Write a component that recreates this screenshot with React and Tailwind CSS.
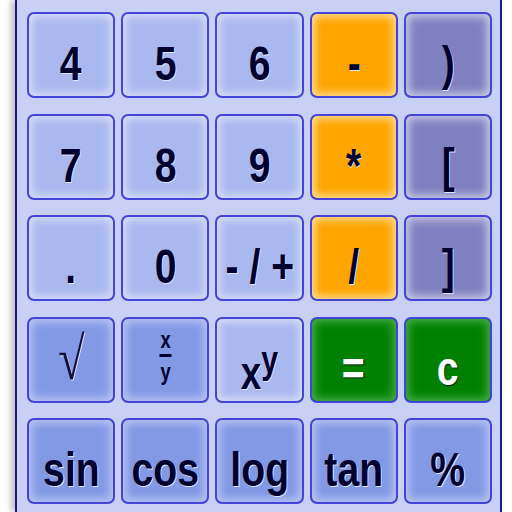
const glyph = "font-['Liberation_Sans',Arial,sans-serif] font-bold";

const tones = {
  num: "bg-[#a9b8ef] shadow-[inset_0_0_9px_3px_rgba(255,255,255,0.55)] text-[#00002e]",
  fn: "bg-[#8299e6] shadow-[inset_0_0_9px_3px_rgba(255,255,255,0.45)] text-[#00002e]",
  op: "bg-[#ffa500] shadow-[inset_0_0_9px_3px_rgba(255,240,200,0.75)] text-[#00002e]",
  par: "bg-[#7f80c0] shadow-[inset_0_0_9px_3px_rgba(255,255,255,0.6)] text-[#00002e]",
  eq: "bg-[#008000] shadow-[inset_0_0_9px_3px_rgba(200,255,200,0.35)] text-white",
};

function Key({ tone, children, align = "end" }) {
  return (
    <button
      className={`h-[86px] rounded-[7px] border-2 border-[#4444d8] flex justify-center overflow-hidden ${
        align === "end" ? "items-end pb-[8px]" : "items-center"
      } ${tones[tone]}`}
    >
      {children}
    </button>
  );
}

function Label({ children, light }) {
  return (
    <span
      className={`${glyph} inline-block whitespace-nowrap scale-x-80 text-[49px] leading-none ${
        light
          ? "[text-shadow:1px_1px_1px_#002000]"
          : "[text-shadow:1px_1px_0_#dfe6ff]"
      }`}
    >
      {children}
    </span>
  );
}

export default function App() {
  return (
    <div className="w-[512px] h-[512px] bg-white overflow-hidden">
      <div className="ml-[15px] w-[487px] h-[512px] bg-[#c8d0f5] border-x-2 border-[#1a1a80] shadow-[-4px_0_6px_rgba(0,0,0,0.25)] pt-[12px] pl-[10px] pr-[8px]">
        <div className="grid grid-cols-5 gap-x-[6px] gap-y-[15.5px]">
          <Key tone="num"><Label>4</Label></Key>
          <Key tone="num"><Label>5</Label></Key>
          <Key tone="num"><Label>6</Label></Key>
          <Key tone="op"><Label>-</Label></Key>
          <Key tone="par"><Label>)</Label></Key>

          <Key tone="num"><Label>7</Label></Key>
          <Key tone="num"><Label>8</Label></Key>
          <Key tone="num"><Label>9</Label></Key>
          <Key tone="op"><Label>*</Label></Key>
          <Key tone="par"><Label>[</Label></Key>

          <Key tone="num"><Label>.</Label></Key>
          <Key tone="num"><Label>0</Label></Key>
          <Key tone="num"><Label>- / +</Label></Key>
          <Key tone="op"><Label>/</Label></Key>
          <Key tone="par"><Label>]</Label></Key>

          <Key tone="fn" align="center">
            <span className="font-['Liberation_Serif',serif] text-[60px] leading-none text-[#10103a] [text-shadow:1px_1px_0_#dfe6ff] -mt-[2px] scale-x-80 inline-block">
              √
            </span>
          </Key>
          <Key tone="fn" align="center">
            <span className={`${glyph} flex flex-col items-center text-[23px] leading-none text-[#00002e] scale-x-80 -mt-[6px]`}>
              <span>x</span>
              <span className="w-[15px] h-[3px] bg-[#00002e] mt-[2px] mb-[4px]" />
              <span>y</span>
            </span>
          </Key>
          <Key tone="num" align="end">
            <span className={`${glyph} inline-block whitespace-nowrap scale-x-80 leading-none text-[#00002e] [text-shadow:1px_1px_0_#dfe6ff] -mb-[3px]`}>
              <span className="text-[46px]">x</span>
              <span className="text-[38px] relative -top-[16px]">y</span>
            </span>
          </Key>
          <Key tone="eq"><Label light>=</Label></Key>
          <Key tone="eq"><Label light>c</Label></Key>

          <Key tone="fn"><Label>sin</Label></Key>
          <Key tone="fn"><Label>cos</Label></Key>
          <Key tone="fn"><Label>log</Label></Key>
          <Key tone="fn"><Label>tan</Label></Key>
          <Key tone="fn"><Label>%</Label></Key>
        </div>
      </div>
    </div>
  );
}
